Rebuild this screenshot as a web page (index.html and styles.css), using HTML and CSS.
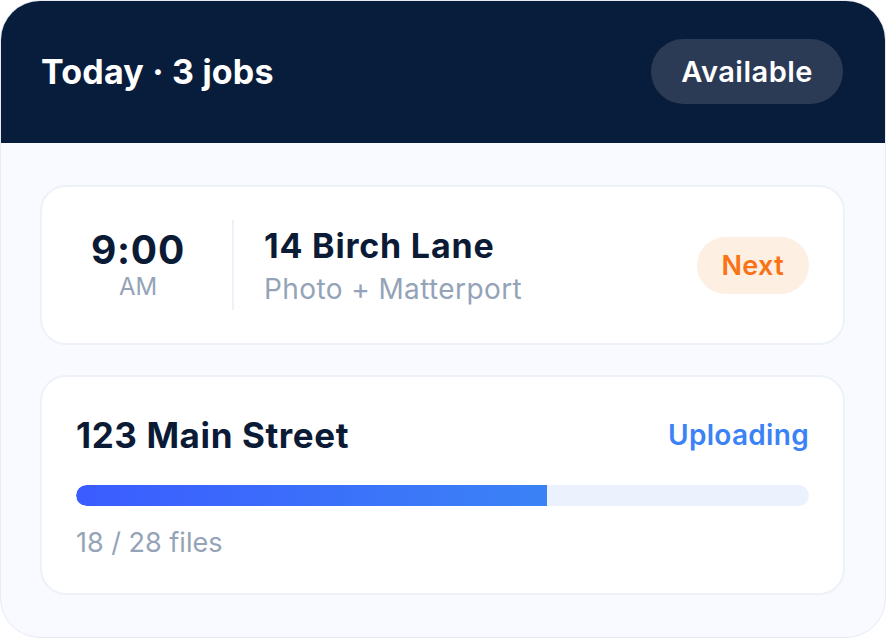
FILE: index.html
```html
<!DOCTYPE html>
<html>
<head>
<meta charset="utf-8">
<link rel="stylesheet" href="styles.css">
</head>
<body>
<div class="panel">
  <header class="head">
    <h1 class="head-title">Today · 3 jobs</h1>
    <span class="status">Available</span>
  </header>
  <main class="body">
    <section class="card job">
      <div class="time">
        <div class="time-main">9:00</div>
        <div class="time-ampm">AM</div>
      </div>
      <div class="divider"></div>
      <div class="job-info">
        <div class="job-name">14 Birch Lane</div>
        <div class="job-type">Photo + Matterport</div>
      </div>
      <span class="badge-next">Next</span>
    </section>
    <section class="card upload">
      <div class="upload-top">
        <div class="job-name street">123 Main Street</div>
        <span class="uploading">Uploading</span>
      </div>
      <div class="bar"><div class="bar-fill" style="width:64.3%"></div></div>
      <div class="files">18 / 28 files</div>
    </section>
  </main>
</div>
</body>
</html>
```
FILE: styles.css
```css
* { box-sizing: border-box; }
html, body { margin: 0; padding: 0; background: #ffffff; }
body { font-family: Inter, "Noto Sans", sans-serif; width: 886px; height: 639px; }
.panel {
  width: 886px;
  height: 638px;
  border-radius: 40px;
  overflow: hidden;
  background: #f8faff;
  border: 1px solid #e6eaf3;
  display: flex;
  flex-direction: column;
}
.head {
  background: #081d3b;
  height: 143px;
  flex: none;
  display: flex;
  align-items: center;
  justify-content: space-between;
  padding: 0 43px 0 41px;
  margin: -1px -1px 0 -1px;
}
.head-title {
  margin: 0;
  color: #ffffff;
  font-size: 34px;
  font-weight: 700;
  letter-spacing: 0.2px;
}
.status {
  background: #2c3b55;
  color: #ffffff;
  height: 65px;
  padding: 0 30px;
  border-radius: 33px;
  display: flex;
  align-items: center;
  font-size: 29px;
  font-weight: 600;
  letter-spacing: 0.5px;
}
.body {
  padding: 42px 40px 0 39px;
  display: flex;
  flex-direction: column;
  gap: 30px;
}
.card {
  background: #ffffff;
  border: 2px solid #edf1f8;
  border-radius: 26px;
}
.job {
  height: 160px;
  display: flex;
  align-items: center;
  padding: 0 34px;
}
.time {
  width: 124px;
  display: flex;
  flex-direction: column;
  align-items: center;
}
.time-main {
  font-size: 39px;
  font-weight: 700;
  color: #0b1b36;
  line-height: 44px;
  letter-spacing: 0.8px;
}
.time-ampm {
  font-size: 24px;
  color: #94a3b8;
  line-height: 30px;
}
.divider {
  width: 2px;
  height: 90px;
  background: #edf1f8;
  margin: 0 30px 0 32px;
}
.job-info { flex: 1; display: flex; flex-direction: column; padding-top: 3px; }
.job-name {
  font-size: 34px;
  font-weight: 700;
  color: #0b1b36;
  line-height: 40px;
  letter-spacing: 0.8px;
}
.street { font-size: 35px; letter-spacing: 0.6px; }
.job-type {
  font-size: 28px;
  color: #94a3b8;
  line-height: 36px;
  margin-top: 5px;
  letter-spacing: 0.4px;
}
.badge-next {
  background: #feefe3;
  color: #f97316;
  height: 57px;
  padding: 0 25px;
  border-radius: 29px;
  display: flex;
  align-items: center;
  font-size: 27px;
  font-weight: 600;
  letter-spacing: 0.3px;
}
.upload {
  height: 220px;
  padding: 38px 34px 0 34px;
  display: flex;
  flex-direction: column;
}
.upload-top {
  display: flex;
  justify-content: space-between;
  align-items: center;
}
.uploading {
  color: #3b82f6;
  font-size: 28px;
  font-weight: 600;
  letter-spacing: 0.3px;
}
.bar {
  margin-top: 30px;
  height: 21px;
  border-radius: 11px;
  background: #ebf2fe;
  overflow: hidden;
}
.bar-fill {
  height: 100%;
  background: linear-gradient(90deg, #3b5cff, #3b82f6);
  border-radius: 11px 0 0 11px;
}
.files {
  margin-top: 19px;
  font-size: 27px;
  color: #94a3b8;
  line-height: 36px;
}
```
